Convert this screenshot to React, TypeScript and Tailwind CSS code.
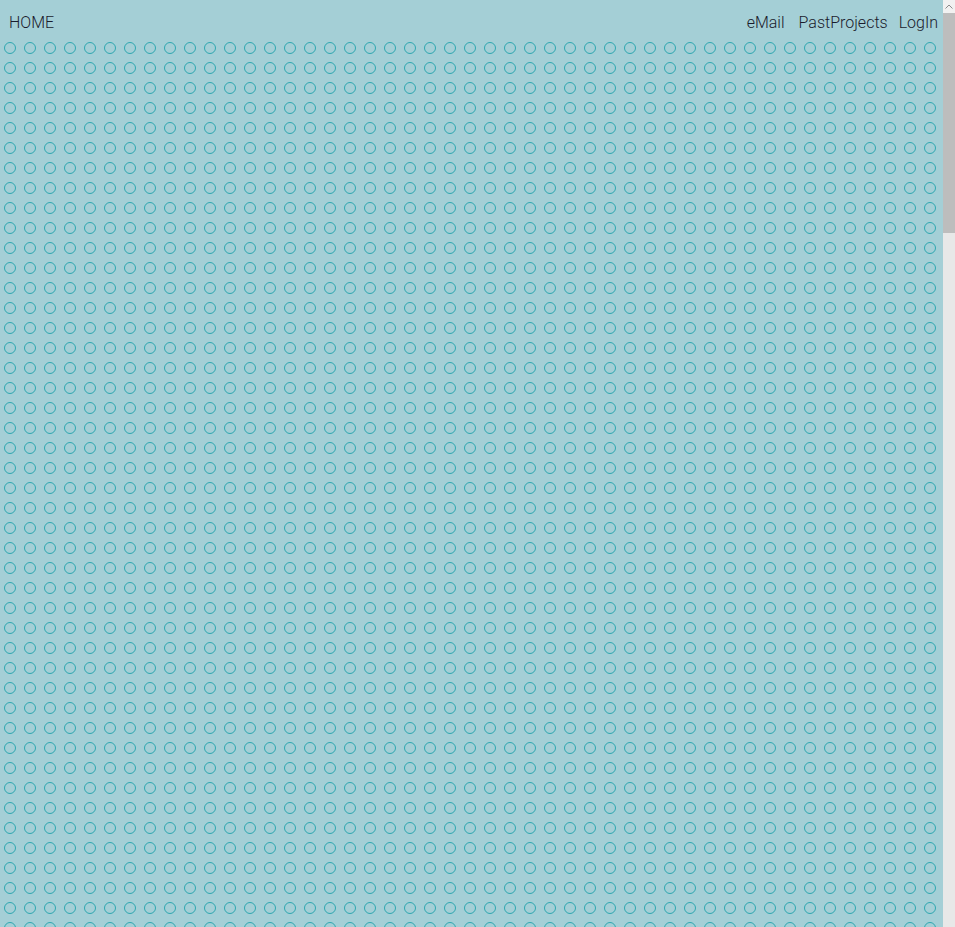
const COLS = 47;
const ROWS = 46;

function FakeScrollbar() {
  return (
    <div className="flex w-[12px] shrink-0 flex-col bg-[#e8e8e8]">
      <div className="flex h-[13px] items-center justify-center bg-[#f1f1f1]">
        <svg width="8" height="5" viewBox="0 0 8 5" fill="none">
          <path d="M0.5 4.5 L4 1 L7.5 4.5" stroke="#8a8a8a" strokeWidth="1" />
        </svg>
      </div>
      <div className="h-[220px] bg-[#bdbdbd]" />
    </div>
  );
}

export default function App() {
  const cells = Array.from({ length: COLS * ROWS });

  return (
    <div
      className="flex h-screen overflow-hidden bg-[#a4cfd6] text-[#1a1b2c]"
      style={{ fontFamily: "Roboto, 'Liberation Sans', sans-serif" }}
    >
      <div className="flex-1 overflow-hidden">
        <nav className="flex h-[38px] items-center justify-between pl-[9px] pr-[5px] pt-[7px] text-base font-light">
          <a href="#">HOME</a>
          <div className="flex items-center">
            <a href="#">eMail</a>
            <a href="#" className="ml-[14px]">PastProjects</a>
            <a href="#" className="ml-[11px]">LogIn</a>
          </div>
        </nav>

        <div className="grid grid-cols-[repeat(47,20px)]">
          {cells.map((_, i) => (
            <div key={i} className="flex h-5 w-5 items-center justify-center">
              <div className="h-3 w-3 rounded-full border border-[#2ea7b0]" />
            </div>
          ))}
        </div>
      </div>
      <FakeScrollbar />
    </div>
  );
}
